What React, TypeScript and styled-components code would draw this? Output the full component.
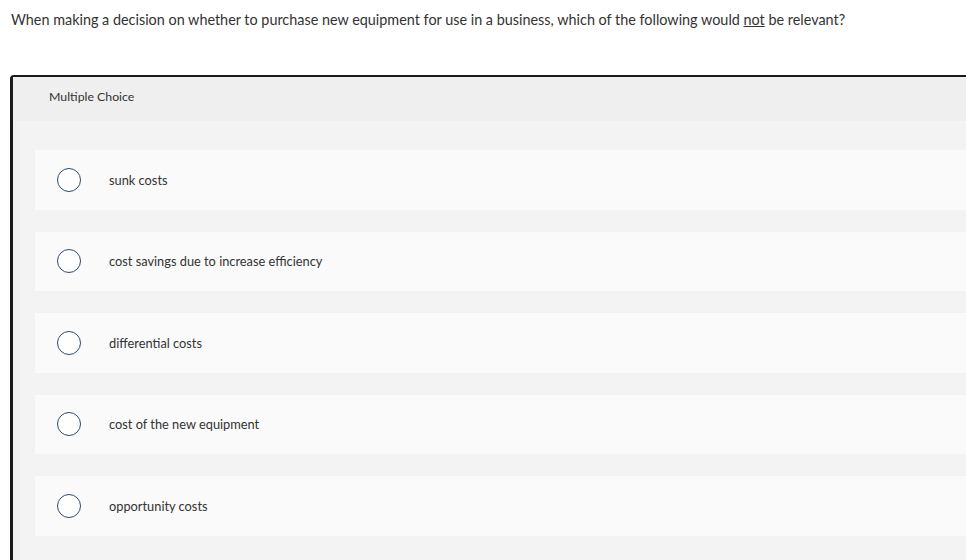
import React from 'react';
import styled, { createGlobalStyle } from 'styled-components';

const GlobalStyle = createGlobalStyle`
  html, body {
    margin: 0;
    padding: 0;
    background: #ffffff;
    overflow: hidden;
  }
  body {
    font-family: Lato, "Liberation Sans", sans-serif;
    color: #333333;
  }
`;

const Page = styled.div`
  width: 966px;
  height: 560px;
  overflow: hidden;
`;

const Question = styled.p`
  margin: 0;
  padding: 11px 0 0 11px;
  font-size: 14.4px;
  line-height: 18px;
  color: #333333;
  u {
    text-decoration: underline;
  }
`;

const Card = styled.section`
  margin: 46px -20px 0 10px;
  border-top: 2px solid #1b1b1b;
  border-left: 3px solid #1b1b1b;
  border-top-left-radius: 4px;
  background: #f3f3f3;
  height: 600px;
`;

const CardHeader = styled.div`
  height: 44px;
  box-sizing: border-box;
  padding: 0 0 5px 36px;
  display: flex;
  align-items: center;
  background: #efefef;
  font-size: 12.3px;
  color: #333333;
`;

const Options = styled.div`
  display: flex;
  flex-direction: column;
  gap: 22px;
  padding: 29px 0 0 22px;
`;

const Option = styled.label`
  height: 59.5px;
  display: flex;
  align-items: center;
  background: #fafafa;
  padding-left: 22px;
  cursor: pointer;
`;

const Radio = styled.span`
  width: 22px;
  height: 22px;
  border: 1.5px solid #2e4a68;
  border-radius: 50%;
  background: #ffffff;
  flex-shrink: 0;
`;

const OptionText = styled.span`
  margin-left: 28px;
  font-size: 12.8px;
  color: #333333;
`;

const choices = [
  'sunk costs',
  'cost savings due to increase efficiency',
  'differential costs',
  'cost of the new equipment',
  'opportunity costs',
];

const App = () => {
  return (
    <>
      <GlobalStyle />
      <Page>
        <Question>
          When making a decision on whether to purchase new equipment for use in
          a business, which of the following would <u>not</u> be relevant?
        </Question>
        <Card>
          <CardHeader>Multiple Choice</CardHeader>
          <Options>
            {choices.map((choice, idx) => (
              <Option key={idx}>
                <Radio />
                <OptionText>{choice}</OptionText>
              </Option>
            ))}
          </Options>
        </Card>
      </Page>
    </>
  );
};

export default App;
